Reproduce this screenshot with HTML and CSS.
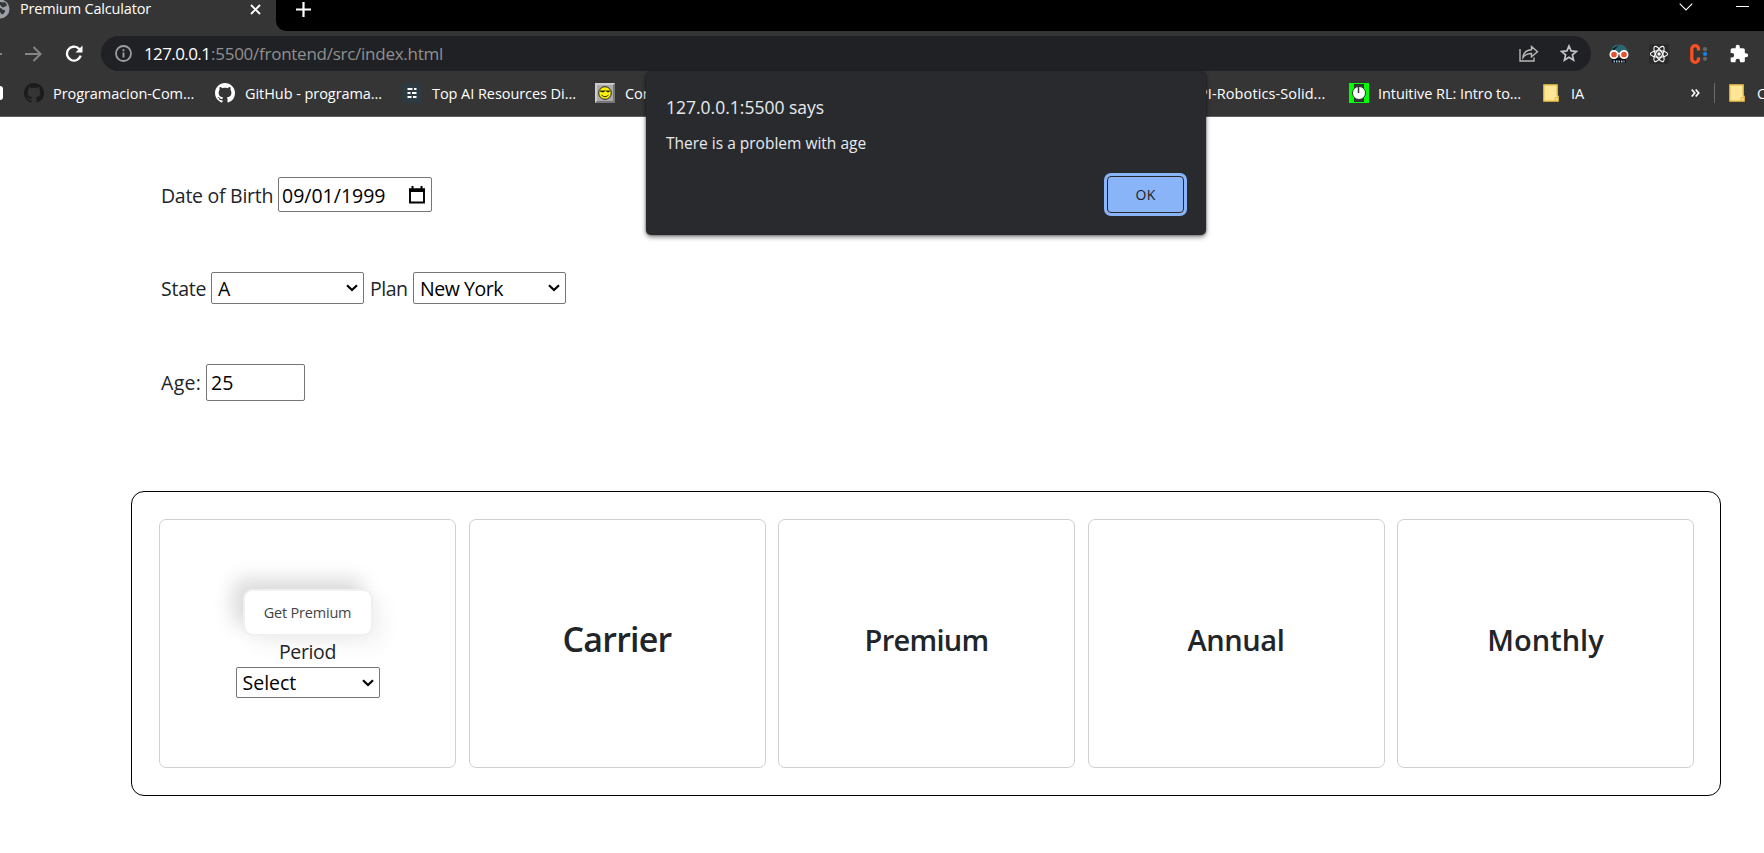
FILE: index.html
```html
<!DOCTYPE html>
<html lang="en">
<head>
<meta charset="utf-8">
<title>Premium Calculator</title>
<link rel="stylesheet" href="styles.css">
</head>
<body>
<svg class="defs" width="0" height="0">
  <symbol id="github" viewBox="0 0 16 16"><path d="M8 0C3.58 0 0 3.58 0 8c0 3.54 2.29 6.53 5.47 7.59.4.07.55-.17.55-.38 0-.19-.01-.82-.01-1.49-2.01.37-2.53-.49-2.69-.94-.09-.23-.48-.94-.82-1.13-.28-.15-.68-.52-.01-.53.63-.01 1.08.58 1.23.82.72 1.21 1.87.87 2.33.66.07-.52.28-.87.51-1.07-1.78-.2-3.64-.89-3.64-3.95 0-.87.31-1.59.82-2.15-.08-.2-.36-1.02.08-2.12 0 0 .67-.21 2.2.82.64-.18 1.32-.27 2-.27s1.36.09 2 .27c1.53-1.04 2.2-.82 2.2-.82.44 1.1.16 1.92.08 2.12.51.56.82 1.27.82 2.15 0 3.07-1.87 3.75-3.65 3.95.29.25.54.73.54 1.48 0 1.07-.01 1.93-.01 2.2 0 .21.15.46.55.38A8.01 8.01 0 0 0 16 8c0-4.42-3.58-8-8-8z"/></symbol>
  <symbol id="folder" viewBox="0 0 16 18"><path d="M.8.8h13.400v10.400l1 1.200v4.800H.8z" fill="#ffe596" stroke="#e5ba3c" stroke-width="1.300"/><path d="M12.200 17v-3.500h2.600" fill="none" stroke="#e5ba3c"/></symbol>
  <symbol id="chev" viewBox="0 0 12 8"><path d="M1 1.200 6 6l5-4.800" fill="none" stroke="#000" stroke-width="2.200"/></symbol>
</svg>
<header class="browser">
  <div class="tabstrip">
    <div class="tab">
      <svg class="globe" width="20" height="20" viewBox="0 0 20 20"><circle cx="10" cy="10" r="9.500" fill="#9aa0a6"/><path d="M10 3c2 0 3 1 5 0l2 3c-1 2-2 1-3 2s-2 0-3-1-2-2-1-4zM10 9c2 0 2 2 4 2s1 3-1 4-2-1-3-2-1-3 0-4zM2 8l6 5v5A8.500 8.500 0 0 1 2 8z" fill="#353535"/></svg>
      <span class="t title">Premium Calculator</span>
      <svg class="close" width="11" height="11" viewBox="0 0 11 11"><path d="m1 1 9 9M10 1l-9 9" stroke="#fff" stroke-width="1.900"/></svg>
    </div>
    <div class="strip">
      <svg class="plus" width="15" height="15" viewBox="0 0 15 15"><path d="M7.500 0v15M0 7.500h15" stroke="#fff" stroke-width="2.200"/></svg>
      <svg class="down" width="14" height="8" viewBox="0 0 14 8"><path d="m.7.700 6.300 6.300L13.300.700" fill="none" stroke="#fff" stroke-width="1.100"/></svg>
      <i class="min"></i>
    </div>
  </div>
  <div class="toolbar">
    <i class="back"></i>
    <svg class="fwd" width="17" height="16" viewBox="0 0 17 16"><path d="M0 8h15.500M8.500 1l7 7-7 7" fill="none" stroke="#858585" stroke-width="2"/></svg>
    <svg class="reload" width="18" height="17" viewBox="0 0 18 17"><path d="M15.700 10.700A7 7 0 1 1 13.500 3.300L16 5.500" fill="none" stroke="#fff" stroke-width="2.300"/><path d="M17.500.500V7.500h-7z" fill="#fff"/></svg>
    <div class="omni">
      <svg class="info" width="17" height="17" viewBox="0 0 17 17"><circle cx="8.500" cy="8.500" r="7.500" fill="none" stroke="#9aa0a6" stroke-width="1.800"/><path d="M8.500 7.500v5M8.500 4.300v2" stroke="#9aa0a6" stroke-width="1.900"/></svg>
      <span class="t host">127.0.0.1</span><span class="t path">:5500/frontend/src/index.html</span>
      <svg class="share" width="20" height="17" viewBox="0 0 20 17"><path d="M1 4v12h14v-3.500M4 12.500C4.500 8 7 5 12.500 4.800V1.500L18.500 6.800l-6 5V8.500C8.500 8.300 6 9.800 4 12.500z" fill="none" stroke="#b8b8b8" stroke-width="1.400"/></svg>
      <svg class="star" width="18" height="18" viewBox="0 0 18 18"><path d="m9 2 2.100 4.900 5.300.500-4 3.500 1.200 5.200L9 13.300l-4.600 2.800 1.200-5.200-4-3.500 5.300-.500z" fill="none" stroke="#c4c4c4" stroke-width="1.700"/></svg>
    </div>
    <svg class="ext" width="20" height="20" viewBox="0 0 20 20"><path d="M1.500 9C1.500 3.500 5 .500 10 .500S18.500 3.500 18.500 9z" fill="#2d6673"/><path d="M3 5 10 1l-5 5zM3 14h14v5H3z" fill="#111"/><path d="M4.500 17.500h11" stroke="#9bd" stroke-width="2.200" stroke-dasharray="1.500 1"/><circle cx="5" cy="10.500" r="3.700" fill="#e4532f" stroke="#fff" stroke-width="1.700"/><circle cx="15" cy="10.500" r="3.700" fill="#e4532f" stroke="#fff" stroke-width="1.700"/><path d="M8 9.500h4" stroke="#fff" stroke-width="1.500"/></svg>
    <svg class="ext" width="20" height="20" viewBox="0 0 20 20"><rect width="20" height="20" rx="2" fill="#2b2b2b"/><g fill="none" stroke="#fff" stroke-width="1.100"><ellipse cx="10" cy="10" rx="8.600" ry="3.300"/><ellipse cx="10" cy="10" rx="8.600" ry="3.300" transform="rotate(60 10 10)"/><ellipse cx="10" cy="10" rx="8.600" ry="3.300" transform="rotate(120 10 10)"/></g><circle cx="10" cy="10" r="1.700" fill="#fff"/></svg>
    <svg class="ext" width="20" height="20" viewBox="0 0 20 20"><path d="M9.500 6.500V5A3.300 3.300 0 0 0 2.800 5v10a3.300 3.300 0 0 0 6.700 0v-1.500" fill="none" stroke="#fb4f22" stroke-width="3.300"/><circle cx="16" cy="5.200" r="2.100" fill="#666"/><circle cx="16" cy="10" r="2.100" fill="#1580e8"/><circle cx="16" cy="14.800" r="2.100" fill="#666"/></svg>
    <svg class="ext" width="20" height="20" viewBox="0 0 24 24"><path d="M20.500 11H19V7c0-1.100-.9-2-2-2h-4V3.500a2.500 2.500 0 0 0-5 0V5H4c-1.100 0-2 .9-2 2v3.800h1.500a2.700 2.700 0 0 1 0 5.400H2V20c0 1.100.9 2 2 2h3.800v-1.500a2.700 2.700 0 0 1 5.400 0V22H17c1.100 0 2-.9 2-2v-4h1.500a2.500 2.500 0 0 0 0-5z" fill="#fff"/></svg>
  </div>
  <nav class="bookmarks">
    <i class="dot"></i>
    <svg class="bi" fill="#1b1b1b"><use href="#github"/></svg><span class="t w1">Programacion-Com...</span>
    <svg class="bi" fill="#fff"><use href="#github"/></svg><span class="t w2">GitHub - programa...</span>
    <svg class="bi" viewBox="0 0 20 20"><rect width="20" height="20" rx="4" fill="#2c3b42"/><path d="M5.500 6h5M12 6h2.500M5.500 10h3M10 10h4.500M5.500 14h4M11 14h3.500" stroke="#fff" stroke-width="2"/></svg><span class="t w3">Top AI Resources Di...</span>
    <svg class="bi" viewBox="0 0 20 20"><rect width="20" height="20" fill="#777"/><path d="M0 0h20l-2 2v16H2L0 20z" fill="#ccc"/><path d="M2 2h16v16H2z" fill="#aaa"/><circle cx="10" cy="10" r="6.300" fill="#fff200" stroke="#222"/><path d="M5 7.500h10v1l-2 1-2.500-1.500-2.500 1.500-3-1z" fill="#222"/><path d="M6.500 12q3.500 3.500 7 0" fill="none" stroke="#222"/></svg><span class="t w4">Con</span>
    <span class="t w5">PI-Robotics-Solid...</span>
    <svg class="bi" viewBox="0 0 20 20"><path d="M0 0h20v20H0z" fill="#0f0"/><path d="M5 1h10v18H5z" fill="#333"/><circle cx="10" cy="10" r="6.500" fill="#fff" stroke="#333"/><path d="M9.500 3v7" stroke="#333" stroke-width="1.500"/></svg><span class="t w6">Intuitive RL: Intro to...</span>
    <svg class="fo"><use href="#folder"/></svg><span class="t w7">IA</span>
    <svg class="more" width="9" height="8" viewBox="0 0 9 8"><path d="m.7.500 3 3.500-3 3.500M4.700.500l3 3.500-3 3.500" fill="none" stroke="#fff" stroke-width="1.700"/></svg>
    <i class="sep"></i>
    <svg class="fo"><use href="#folder"/></svg><span class="t w8">O</span>
  </nav>
</header>
<div class="dialog">
  <div class="t dt">127.0.0.1:5500 says</div>
  <div class="t dm">There is a problem with age</div>
  <div class="ok"><span class="t">OK</span></div>
</div>
<main class="page">
  <div class="row r1"><span class="t lb1">Date of Birth</span><div class="field date"><span class="t">09/01/1999</span><svg width="16" height="18" viewBox="0 0 16 18"><path d="M1 3.500h14v13H1z" fill="none" stroke="#000" stroke-width="1.900"/><path d="M0 2.500h16V6H0zM2.500 0h2v3h-2zM11.500 0h2v3h-2z"/></svg></div></div>
  <div class="row r2"><span class="t lb2">State</span><div class="field sel"><span class="t">A</span><svg width="12" height="8"><use href="#chev"/></svg></div><span class="t lb3">Plan</span><div class="field sel"><span class="t ny">New York</span><svg width="12" height="8"><use href="#chev"/></svg></div></div>
  <div class="row r3"><span class="t lb4">Age:</span><div class="field age"><span class="t">25</span></div></div>
  <section class="board">
    <div class="card first"><div class="get"><span class="t">Get Premium</span></div><div class="per"><span class="t">Period</span></div><div class="field sel ps"><span class="t">Select</span><svg width="12" height="8"><use href="#chev"/></svg></div></div>
    <div class="card carrier"><span class="t">Carrier</span></div>
    <div class="card premium"><span class="t">Premium</span></div>
    <div class="card annual"><span class="t">Annual</span></div>
    <div class="card"><span class="t">Monthly</span></div>
  </section>
</main>
</body>
</html>
```
FILE: styles.css
```css
*{box-sizing:border-box}
body{margin:0;width:1764px;height:853px;overflow:hidden;background:#fff;color:#212529;font-family:"Open Sans","Noto Sans",sans-serif;position:relative}
.defs{position:absolute}
svg,i{flex:none;display:block}
.t{white-space:nowrap;flex:none}
.browser{height:117px;background:#353535;border-bottom:1px solid #606060;color:#fff;overflow:hidden}
.tabstrip{height:31px;display:flex}
.tab{width:276px;height:17px;display:flex;align-items:center;flex:none;font-size:14.5px;letter-spacing:-.18px;line-height:17px}
.globe{margin-left:-10px;margin-right:10px}
.title{width:230px}
.close{margin-top:1px}
.strip{flex:1;background:#000;border-bottom-left-radius:10px;display:flex}
.plus{margin:2px 0 0 20px}
.down{margin:3px 0 0 1368px}
.min{width:13px;height:1px;background:#fff;margin:6px 0 0 43px}
.toolbar{height:40px;padding-top:5px;display:flex;align-items:center}
.back{width:2px;height:2px;background:#858585;margin-right:23px}
.fwd{margin-right:23px}
.reload{margin-right:18px}
.omni{flex:none;width:1490px;height:35px;border-radius:18px;background:#202124;display:flex;align-items:center;font-size:17px;line-height:23px;padding:0 0 1px 14px;margin-right:18px}
.info{margin-right:12px}
.host{width:67px;letter-spacing:-.6px}
.path{width:1308px;color:#909090;letter-spacing:-.26px}
.share{margin-right:21px}
.ext{margin-right:20px}
.bookmarks{height:45px;display:flex;align-items:center;font-size:14.5px;letter-spacing:-.06px;padding-bottom:1px}
.bi{width:20px;height:20px}
.fo{width:16px;height:18px}
.dot{width:3px;height:14px;border-radius:0 7px 7px 0;background:#fff;margin-right:21px}
.w1{margin-left:9px;width:162px}
.w2{margin-left:10px;width:157px}
.w3{margin-left:10px;width:163px}
.w4{margin-left:10px;width:574px}
.w5{width:150px;letter-spacing:.1px}
.w6{margin-left:9px;width:165px}
.w7{margin-left:12px;width:120px}
.sep{width:1px;height:20px;background:#6b6b6b;margin:0 14px}
.w8{margin-left:12px}
.dialog{position:absolute;left:646px;top:72px;width:560px;height:163px;background:#292a2d;border-radius:5px;box-shadow:0 2px 5px rgba(0,0,0,.5),0 0 2px rgba(0,0,0,.5);color:#e8eaed;padding:23px 22px 0 20px;display:flex;flex-direction:column}
.dt{font-size:17.5px;line-height:25px}
.dm{font-size:15.5px;line-height:22px;margin-top:12px}
.ok{width:77px;height:37px;background:#8ab4f8;border-radius:4px;border:1px solid #292a2d;box-shadow:0 0 0 3px #8ab4f8;align-self:flex-end;margin-top:22px;color:#202124;font-size:14px;letter-spacing:.3px;display:flex;align-items:center;justify-content:center}
.page{padding:60px 43px 0 131px;font-size:19.5px}
.row{display:flex;align-items:center;padding-left:30px;margin-bottom:60px}
.lb1{width:117px;letter-spacing:-.28px;padding-top:1px}
.lb2{width:50px;letter-spacing:-.25px}
.lb3{width:43px;margin-left:6px;letter-spacing:-.5px}
.lb4{width:45px;letter-spacing:.3px}
.ny{letter-spacing:-.45px}
.field{border:1px solid #767676;border-radius:2px;background:#fff;color:#000;display:flex;align-items:center;justify-content:space-between}
.date{width:154px;height:35px;padding:1px 6px 0 3px}
.sel{width:153px;height:32px;padding:0 5px 0 6px}
.age{width:99px;height:37px;padding-left:4px}
.r3{margin-bottom:90px}
.board{width:1590px;height:305px;border:1px solid #000;border-radius:13px;padding:27px 26px 27px 27px;display:grid;grid-template-columns:repeat(5,1fr);gap:12.500px}
.card{border:1px solid #d0d0d0;border-radius:7px;display:flex;align-items:center;justify-content:center;font-weight:600;font-size:29px;padding-bottom:9px}
.carrier{font-size:34px;letter-spacing:-.8px}
.premium{letter-spacing:-.7px}
.annual{letter-spacing:-.4px}
.first{flex-direction:column;font-size:19.5px;font-weight:400;justify-content:flex-start;padding-top:69px}
.get{width:130px;height:47px;border:2px solid #f0f0f0;border-radius:10px;background:#fff;box-shadow:-10px -10px 20px rgba(0,0,0,.15),10px 10px 20px rgba(0,0,0,.05);font-size:14.5px;letter-spacing:-.2px;color:#444;display:flex;align-items:center;justify-content:center}
.per{line-height:31px;letter-spacing:-.35px}
.ps{width:144px;height:31px}
```
